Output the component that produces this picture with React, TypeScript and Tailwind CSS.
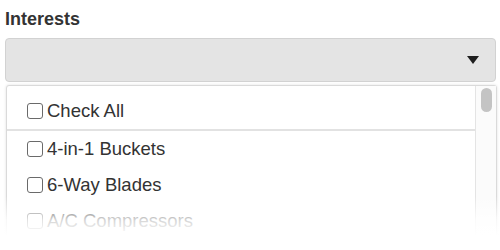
import React from "react";

const items = ["4-in-1 Buckets", "6-Way Blades", "A/C Compressors"];

function Box() {
  return (
    <span className="inline-block w-[16px] h-[16px] rounded-[3px] border-[1.5px] border-[#6a6a6a] bg-white shrink-0" />
  );
}

function Row({ label }: { label: string }) {
  return (
    <div className="h-[36px] flex items-center pl-[20px] gap-[4px]">
      <Box />
      <span className="text-[18.5px] leading-[20px] text-[#333]">{label}</span>
    </div>
  );
}

export default function App() {
  return (
    <div className="relative w-[500px] h-[250px] overflow-hidden bg-white text-[#333] font-['Liberation_Sans',Arial,sans-serif]">
      <div className="pt-[8px] pl-[5px] pr-[4px]">
        <div className="text-[18px] leading-[22px] font-bold text-[#333]">Interests</div>
        <div className="mt-[8px] h-[44px] rounded-[4px] bg-[#e4e4e4] border border-[#d2d2d2] flex items-center justify-end pr-[16px]">
          <svg width="12" height="8" viewBox="0 0 12 8">
            <path d="M0 0 L12 0 L6 8 Z" fill="#1e1e1e" />
          </svg>
        </div>
        <div className="mt-[3px] ml-[1px] mr-[-1px] border border-[#dadada] rounded-t-[3px] shadow-[0_0_3px_rgba(0,0,0,0.12)] flex h-[160px] bg-white">
          <div className="flex-1 pt-[7px]">
            <Row label="Check All" />
            <div className="h-[2px] bg-[#e2e2e2]" />
            {items.map((t) => (
              <Row key={t} label={t} />
            ))}
          </div>
          <div className="w-[21px] border-l border-[#e4e4e4] bg-[#fbfbfb] pt-[2px] flex justify-center">
            <div className="w-[11px] h-[24px] rounded-full bg-[#c4c4c4]" />
          </div>
        </div>
      </div>
      <div className="absolute left-0 right-0 top-[196px] h-[54px] bg-[linear-gradient(to_bottom,rgba(255,255,255,0)_0px,rgba(255,255,255,0.8)_24px,#fff_40px)]" />
    </div>
  );
}
